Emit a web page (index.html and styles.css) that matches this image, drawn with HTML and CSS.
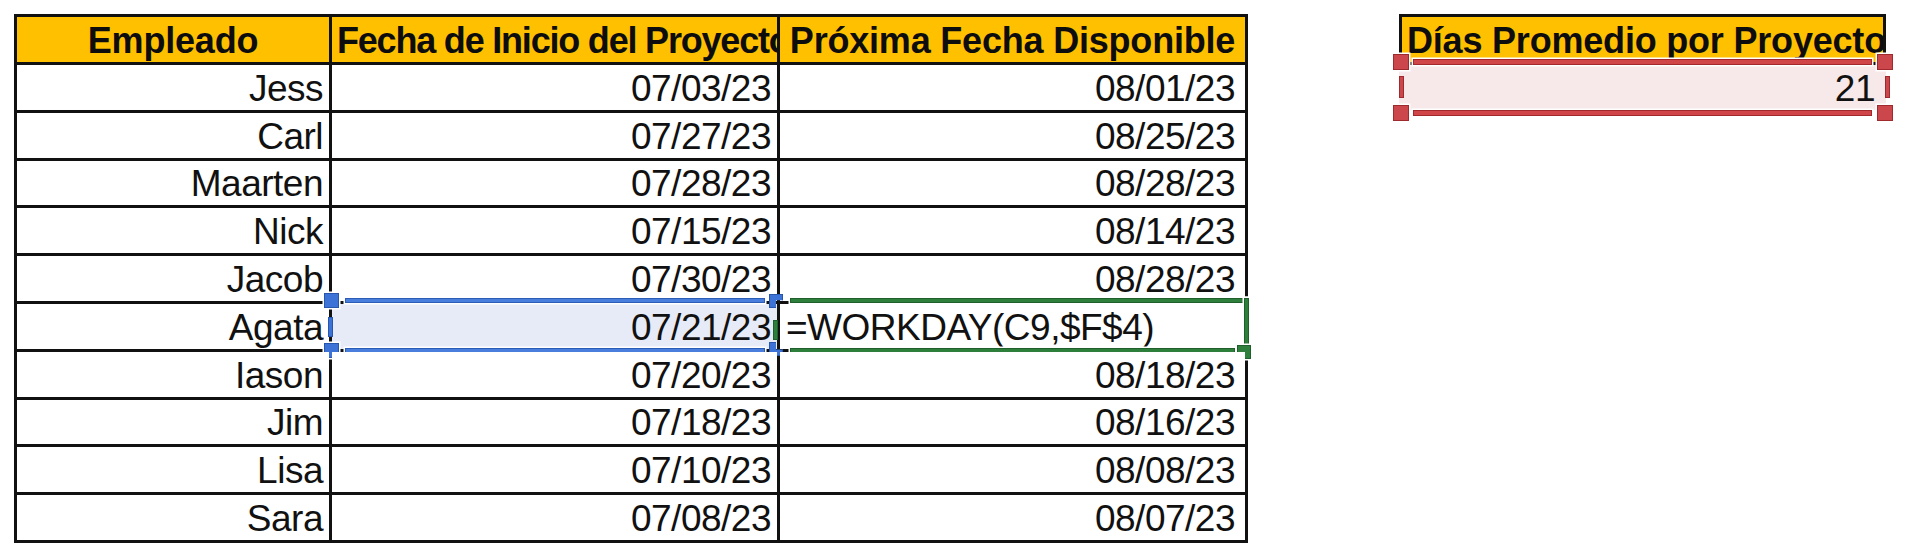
FILE: index.html
```html
<!DOCTYPE html>
<html lang="es">
<head>
<meta charset="utf-8">
<title>Fechas de proyecto</title>
<link rel="stylesheet" href="styles.css">
</head>
<body>
<div class="page">
  <div class="sheet">
    <div class="cell head">Empleado</div>
    <div class="cell head left tight">Fecha de Inicio del Proyecto</div>
    <div class="cell head">Próxima Fecha Disponible</div>

    <div class="cell num">Jess</div><div class="cell num">07/03/23</div><div class="cell num wide">08/01/23</div>
    <div class="cell num">Carl</div><div class="cell num">07/27/23</div><div class="cell num wide">08/25/23</div>
    <div class="cell num">Maarten</div><div class="cell num">07/28/23</div><div class="cell num wide">08/28/23</div>
    <div class="cell num">Nick</div><div class="cell num">07/15/23</div><div class="cell num wide">08/14/23</div>
    <div class="cell num">Jacob</div><div class="cell num">07/30/23</div><div class="cell num wide">08/28/23</div>
    <div class="cell num">Agata</div>
    <div class="cell num ref-blue">07/21/23
      <span class="bline b-top"></span><span class="bline b-bot"></span>
      <span class="bh b-tl"></span><span class="bh b-bl"></span>
      <span class="bh b-tr"></span><span class="bh b-br"></span>
      <span class="bbar"></span>
    </div>
    <div class="cell edit">=WORKDAY(C9,$F$4)
      <span class="gline g-top"></span><span class="gline g-right"></span><span class="gline g-bot"></span>
      <span class="gh g-br"></span><span class="gbar"></span>
    </div>
    <div class="cell num">Iason</div><div class="cell num">07/20/23</div><div class="cell num wide">08/18/23</div>
    <div class="cell num">Jim</div><div class="cell num">07/18/23</div><div class="cell num wide">08/16/23</div>
    <div class="cell num">Lisa</div><div class="cell num">07/10/23</div><div class="cell num wide">08/08/23</div>
    <div class="cell num">Sara</div><div class="cell num">07/08/23</div><div class="cell num wide">08/07/23</div>
  </div>

  <div class="side">
    <div class="cell head left side-head">Días Promedio por Proyecto</div>
    <div class="cell num side-val">21
      <span class="rline r-top"></span><span class="rline r-bot"></span>
      <span class="rh r-tl"></span><span class="rh r-tr"></span>
      <span class="rh r-bl"></span><span class="rh r-br"></span>
      <span class="rbar r-left"></span><span class="rbar r-right"></span>
    </div>
  </div>
</div>
</body>
</html>
```

FILE: styles.css
```css
* { box-sizing: border-box; }
html, body { margin: 0; padding: 0; background: #fff; }
body { font-family: "Liberation Sans", Arial, sans-serif; color: #111; }

.page {
  display: flex;
  align-items: flex-start;
  padding: 14px 0 0 14px;
}

.sheet {
  display: grid;
  grid-template-columns: 312px 445px 465px;
  grid-template-rows: 45px repeat(10, 44.8px);
  gap: 3px;
  padding: 3px;
  background: #111;
}

.cell {
  position: relative;
  display: flex;
  align-items: flex-end;
  background: #fff;
  font-size: 37px;
  letter-spacing: -0.5px;
  line-height: 1;
  padding: 0 6px 3px 6px;
  white-space: nowrap;
}

.head {
  background: #ffc000;
  font-weight: bold;
  font-size: 36px;
  letter-spacing: -0.2px;
  justify-content: center;
  overflow: hidden;
  color: #0d0d0d;
}
.head.left { justify-content: flex-start; padding-left: 5px; }
.head.tight { letter-spacing: -1.2px; }

.num { justify-content: flex-end; }
.num.wide { padding-right: 10px; }

.ref-blue { background: #e7ebf7; }
.edit { justify-content: flex-start; padding-left: 6px; }

/* blue reference range */
.bline {
  position: absolute;
  height: 5px;
  left: 13px;
  right: 12px;
  background: #4a7edc;
  border: 1px solid #2b5cb8;
  box-shadow: 0 0 0 1.5px #fff;
}
.b-top { top: -6px; }
.b-bot { bottom: -4px; }
.bh {
  position: absolute;
  width: 15px;
  height: 15px;
  background: #3d72d6;
  border: 1px solid #2856ad;
  box-shadow: 0 0 0 1.5px #fff;
}
.b-tl { left: -8px; top: -11px; }
.b-bl { left: -8px; bottom: -9px; }
.b-tr {
  right: -6px; top: -10px; width: 14px; height: 14px;
  clip-path: polygon(0 0, 100% 0, 100% 45%, 50% 45%, 50% 100%, 0 100%);
  box-shadow: none;
}
.b-br {
  right: -6px; bottom: -7px; width: 14px; height: 14px;
  clip-path: polygon(0 0, 50% 0, 50% 55%, 100% 55%, 100% 100%, 0 100%);
  box-shadow: none;
}
.bbar {
  position: absolute;
  left: -4px;
  top: 13px;
  width: 5px;
  height: 20px;
  background: #3d72d6;
  border: 1px solid #2856ad;
}

/* green editing border */
.gline {
  position: absolute;
  background: #2f7f3c;
  border: 1px solid #1f5f2b;
  box-shadow: 0 0 0 1.5px #fff;
}
.g-top { top: -6px; left: 10px; right: -4px; height: 5px; }
.g-bot { bottom: -4px; left: 10px; right: 10px; height: 5px; }
.g-right { right: -4px; top: -6px; bottom: -4px; width: 5px; }
.gh {
  position: absolute;
  width: 14px;
  height: 14px;
  background: #2f7f3c;
  border: 1px solid #1f5f2b;
  box-shadow: 0 0 0 1.5px #fff;
}
.g-br { right: -6px; bottom: -10px; }
.gbar {
  position: absolute;
  left: -7px;
  top: 16px;
  width: 5px;
  height: 20px;
  background: #2f7f3c;
  border: 1px solid #1f5f2b;
}

/* side block */
.side {
  display: flex;
  flex-direction: column;
  width: 487px;
  margin-left: 151px;
}
.side-head {
  height: 51px;
  border: 3px solid #111;
}
.side-val {
  height: 45px;
  background: #f7e8e9;
  padding-right: 11px;
}
.rline {
  position: absolute;
  left: 14px;
  right: 14px;
  height: 6px;
  background: #cf4548;
  border: 1px solid #a2282c;
  box-shadow: 0 0 0 1.5px #fff;
}
.r-top { top: -6px; }
.r-bot { bottom: -6px; }
.rh {
  position: absolute;
  width: 16px;
  height: 16px;
  background: #cc474b;
  border: 1px solid #9f2a2e;
  box-shadow: 0 0 0 1.5px #fff;
}
.r-tl { left: -6px; top: -11px; }
.r-bl { left: -6px; bottom: -11px; }
.r-tr { right: -7px; top: -11px; }
.r-br { right: -7px; bottom: -11px; }
.rbar {
  position: absolute;
  top: 11px;
  width: 5px;
  height: 22px;
  background: #cc474b;
  border: 1px solid #9f2a2e;
}
.r-left { left: 0; }
.r-right { right: -4px; }
```
